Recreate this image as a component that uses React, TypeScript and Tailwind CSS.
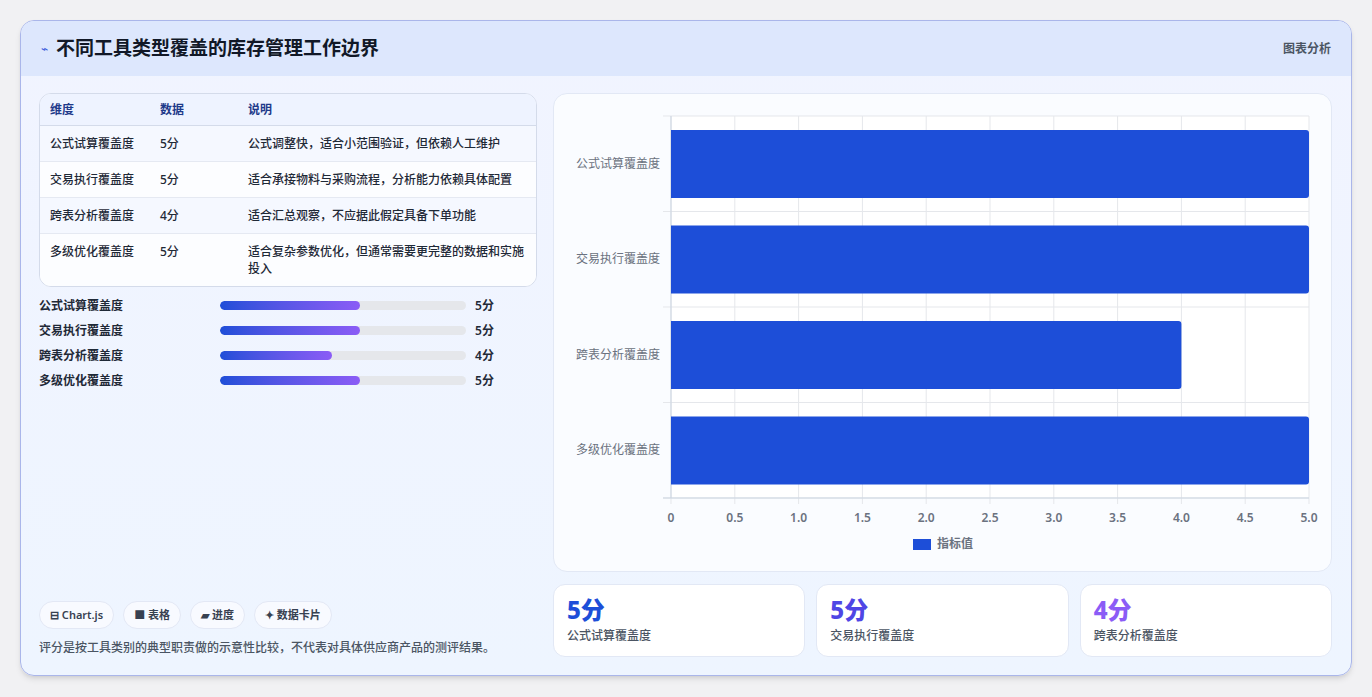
import React from "react";

const rows = [
  ["公式试算覆盖度", "5分", "公式调整快，适合小范围验证，但依赖人工维护"],
  ["交易执行覆盖度", "5分", "适合承接物料与采购流程，分析能力依赖具体配置"],
  ["跨表分析覆盖度", "4分", "适合汇总观察，不应据此假定具备下单功能"],
  ["多级优化覆盖度", "5分", "适合复杂参数优化，但通常需要更完整的数据和实施投入"],
];
const prog = [["公式试算覆盖度", 5], ["交易执行覆盖度", 5], ["跨表分析覆盖度", 4], ["多级优化覆盖度", 5]] as const;

function Chart() {
  const x0 = 117, x1 = 755, y0 = 22, y1 = 404;
  const xs = Array.from({ length: 11 }, (_, i) => x0 + (i * (x1 - x0)) / 10);
  const step = (y1 - y0) / 4;
  const vals = [5, 5, 4, 5];
  return (
    <svg width="779" height="479" className="block">
      <rect x={x0} y={y0} width={x1 - x0} height={y1 - y0} fill="#ffffff" />
      {xs.map((x, i) => (
        <line key={i} x1={x} x2={x} y1={y0} y2={y1 + 6} stroke="#e5e7eb" />
      ))}
      {[0, 1, 2, 3, 4].map((i) => (
        <line key={i} x1={x0 - 8} x2={x1} y1={y0 + i * step} y2={y0 + i * step} stroke="#e5e7eb" />
      ))}
      <line x1={x0} x2={x0} y1={y0} y2={y1} stroke="#cbd5e1" />
      <line x1={x0 - 8} x2={x1} y1={y1} y2={y1} stroke="#cbd5e1" />
      {vals.map((v, i) => {
        const w = ((x1 - x0) * v) / 5;
        const y = y0 + i * step + 14;
        return (
          <g key={i}>
            <path d={`M${x0} ${y} H${x0 + w - 3} a3 3 0 0 1 3 3 V${y + 65} a3 3 0 0 1 -3 3 H${x0} Z`} fill="#1d4ed8" />
            <text x={x0 - 11} y={y0 + i * step + step / 2 + 4} textAnchor="end" fontSize="12" fill="#6b7280">{rows[i][0]}</text>
          </g>
        );
      })}
      {xs.map((x, i) => (
        <text key={i} x={x} y={428} textAnchor="middle" fontSize="12" fontWeight="600" fill="#6b7280">{i === 0 ? "0" : (i / 2).toFixed(1)}</text>
      ))}
      <rect x={359} y={445} width={18} height={11} fill="#1d4ed8" />
      <text x={383} y={454} fontSize="12" fontWeight="600" fill="#6b7280">指标值</text>
    </svg>
  );
}

export default function App() {
  return (
    <div className="min-h-[697px] bg-[#f1f1f3] pt-5 px-5 pb-[21px]" style={{ fontFamily: '"Noto Sans", "Noto Sans CJK SC", sans-serif' }}>
      <div className="rounded-[14px] border border-[#aab6ea] bg-gradient-to-b from-[#f1f4ff] to-[#eef5ff] overflow-hidden shadow-md">
        <div className="h-[55px] bg-[#dde7fd] flex items-center justify-between px-[20px]">
          <div className="flex items-center gap-2">
            <span className="text-[#3b5bdb] text-[12px]">⌁</span>
            <span className="text-[19px] font-bold text-[#111827]">不同工具类型覆盖的库存管理工作边界</span>
          </div>
          <span className="text-[12px] font-semibold text-[#4b5563]">图表分析</span>
        </div>
        <div className="flex gap-4 px-[18px] pt-[17px] pb-[18px]">
          <div className="w-[498px] flex flex-col">
            <div className="rounded-[12px] border border-[#d4dbea] overflow-hidden bg-white text-[12px]">
              <div className="flex h-[32px] items-center bg-[#eef3ff] border-b border-[#d4dbea] font-semibold text-[#1e3a8a]">
                <div className="w-[120px] pl-[10px]">维度</div><div className="w-[88px]">数据</div><div>说明</div>
              </div>
              {rows.map((r, i) => (
                <div key={i} className={`flex py-[9px] text-[#1f2937] font-medium leading-[17px] ${i % 2 === 0 ? "bg-[#f5f8ff]" : "bg-[#fcfdff]"} ${i < 3 ? "border-b border-[#e5e9f2]" : ""}`}>
                  <div className="w-[120px] pl-[10px] shrink-0">{r[0]}</div>
                  <div className="w-[88px] shrink-0">{r[1]}</div>
                  <div className="pr-3">{r[2]}</div>
                </div>
              ))}
            </div>
            <div className="mt-[10px] flex flex-col gap-[8px]">
              {prog.map(([l, v]) => (
                <div key={l} className="flex items-center h-[17px] text-[12px] font-semibold text-[#1f2937]">
                  <div className="w-[181px]">{l}</div>
                  <div className="w-[246px] h-[9px] rounded-full bg-[#e5e7eb] overflow-hidden">
                    <div className="h-full rounded-full bg-gradient-to-r from-[#1d4ed8] to-[#8b5cf6]" style={{ width: `${(v / 5) * 57}%` }} />
                  </div>
                  <div className="ml-[9px]">{v}分</div>
                </div>
              ))}
            </div>
            <div className="mt-auto">
              <div className="flex gap-[9px] text-[11px] font-semibold text-[#374151]">
                {["⊟ Chart.js", "■ 表格", "▰ 进度", "✦ 数据卡片"].map((t) => (
                  <span key={t} className="h-[28px] px-[10px] flex items-center rounded-full bg-[#f8faff] border border-[#e3e8f5]">{t}</span>
                ))}
              </div>
              <div className="mt-[10px] text-[12px] font-medium text-[#4b5563]">评分是按工具类别的典型职责做的示意性比较，不代表对具体供应商产品的测评结果。</div>
            </div>
          </div>
          <div className="w-[779px] flex flex-col gap-[12px]">
            <div className="h-[479px] rounded-[14px] border border-[#e2e8f5] bg-[#fafcff] overflow-hidden">
              <Chart />
            </div>
            <div className="grid grid-cols-3 gap-[11px]">
              {[["5分", "text-[#1d4ed8]", "公式试算覆盖度"], ["5分", "text-[#4f46e5]", "交易执行覆盖度"], ["4分", "text-[#8b5cf6]", "跨表分析覆盖度"]].map(([v, c, l]) => (
                <div key={l} className="h-[73px] rounded-[12px] border border-[#e2e8f5] bg-white px-[13px] pt-[10px]">
                  <div className={`text-[24px] font-extrabold leading-[30px] ${c}`}>{v}</div>
                  <div className="text-[12px] font-medium text-[#4b5563] mt-[2px]">{l}</div>
                </div>
              ))}
            </div>
          </div>
        </div>
      </div>
    </div>
  );
}
